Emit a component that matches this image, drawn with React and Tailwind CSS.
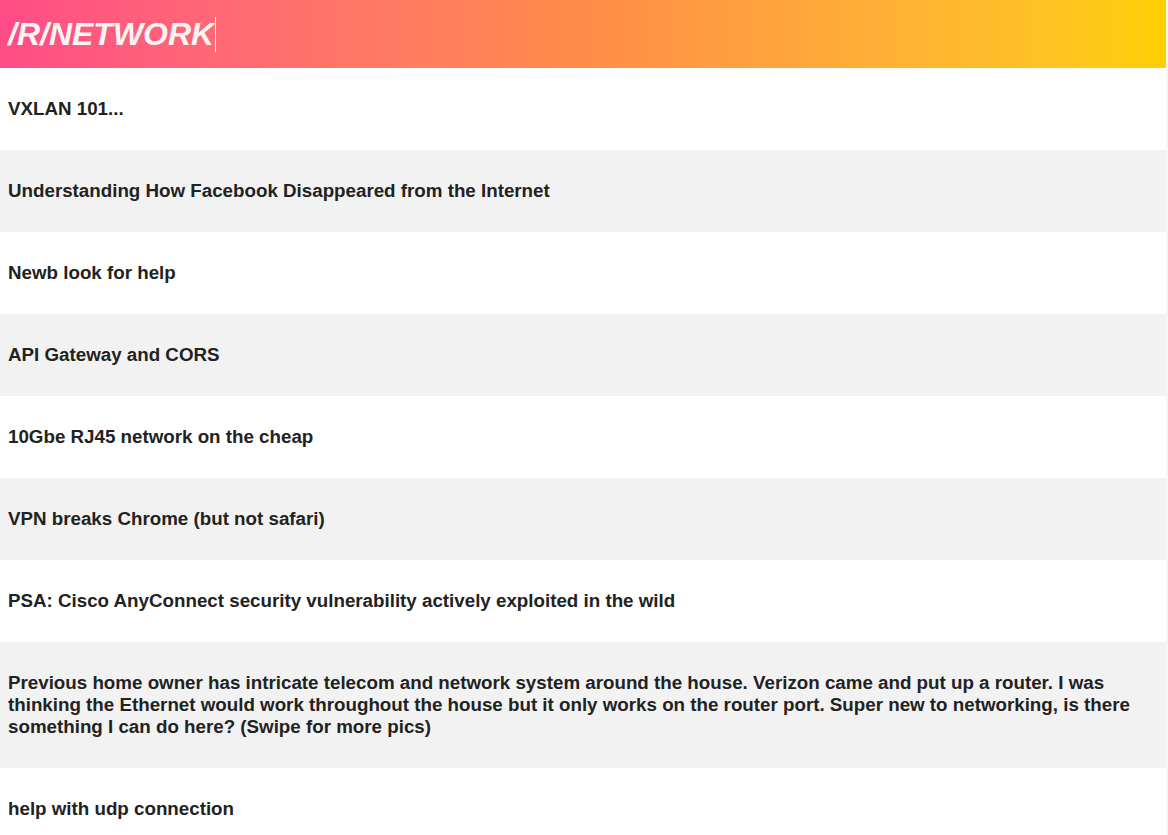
const posts = [
  'VXLAN 101...',
  'Understanding How Facebook Disappeared from the Internet',
  'Newb look for help',
  'API Gateway and CORS',
  '10Gbe RJ45 network on the cheap',
  'VPN breaks Chrome (but not safari)',
  'PSA: Cisco AnyConnect security vulnerability actively exploited in the wild',
  'Previous home owner has intricate telecom and network system around the house. Verizon came and put up a router. I was thinking the Ethernet would work throughout the house but it only works on the router port. Super new to networking, is there something I can do here? (Swipe for more pics)',
  'help with udp connection',
];

function App() {
  return (
    <div className="min-h-screen bg-[#f6f6f6] font-['Liberation_Sans',Arial,sans-serif]">
      <div className="w-[1166px] bg-white">
        <header className="flex h-[68px] items-center bg-gradient-to-r from-[#ff4c87] via-[#ff8c48] to-[#ffd000] px-2">
          <h1 className="text-[32px] font-bold italic leading-none text-[#f8f4f4]">/R/NETWORK</h1>
          <span className="ml-px h-[35px] w-px bg-[#f4f4f4]" />
        </header>
        <ul>
          {posts.map((title, i) => (
            <li
              key={i}
              className={`px-2 py-[30px] text-[18.75px] font-bold leading-[22px] text-[#222] ${i % 2 === 1 ? 'bg-[#f2f2f2]' : 'bg-white'}`}
            >
              {title}
            </li>
          ))}
        </ul>
      </div>
    </div>
  );
}

export default App;
